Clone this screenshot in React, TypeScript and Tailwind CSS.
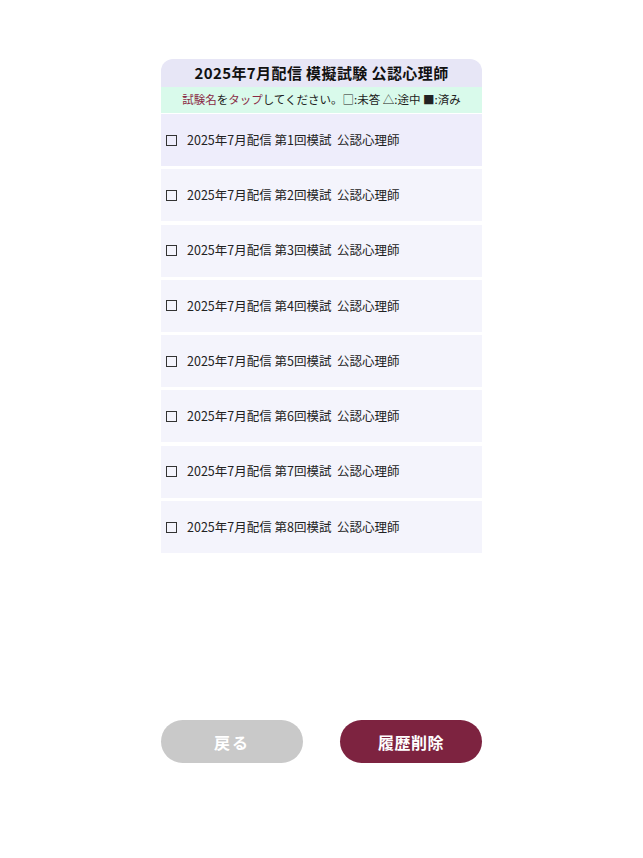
import React from "react";

const font = { fontFamily: '"Noto Sans CJK JP", "Noto Sans", sans-serif' };

export default function App() {
  const rows = [1, 2, 3, 4, 5, 6, 7, 8];
  return (
    <div className="min-h-[858px] w-full bg-white" style={font}>
      <div className="mx-auto w-[321px] pt-[59px]">
        <div className="h-[28px] rounded-t-[12px] bg-[#e7e6f6] flex items-center justify-center text-[15px] font-bold tracking-[0.4px] text-[#111]">
          2025年7月配信 模擬試験 公認心理師
        </div>
        <div className="h-[26px] bg-[#d9faeb] flex items-center justify-center text-[11.5px] text-[#222]">
          <span className="text-[#8a2a45]">試験名</span>を<span className="text-[#8a2a45]">タップ</span>してください。□:未答 △:途中 ■:済み
        </div>
        <div className="flex flex-col gap-[3.3px] pt-[1px]">
          {rows.map((n) => (
            <div
              key={n}
              className={`h-[52px] flex items-center pl-[5px] text-[12.5px] text-[#222] ${n === 1 ? "bg-[#eeedfb]" : "bg-[#f4f4fc]"}`}
            >
              <span className="w-[11px] h-[11px] border-[1.5px] border-[#333] mr-[10px]" />
              <span>2025年7月配信 第{n}回模試&nbsp; 公認心理師</span>
            </div>
          ))}
        </div>
        <div className="mt-[167px] flex justify-between">
          <button className="w-[142px] h-[43px] rounded-full bg-[#c9c9c9] text-white text-[16px] font-bold tracking-[2px]">
            戻る
          </button>
          <button className="w-[142px] h-[43px] rounded-full bg-[#7d2340] text-white text-[16px] font-bold tracking-[0.5px]">
            履歴削除
          </button>
        </div>
      </div>
    </div>
  );
}
